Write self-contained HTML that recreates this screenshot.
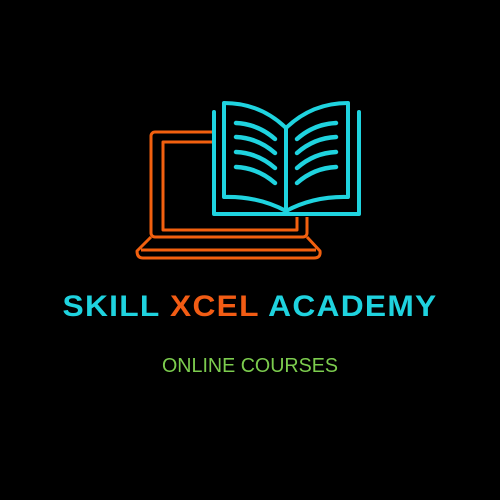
<!DOCTYPE html>
<html><head><style>
html,body{margin:0;padding:0;background:#000;width:500px;height:500px;overflow:hidden}
</style></head><body>
<svg width="500" height="500" viewBox="0 0 500 500" xmlns="http://www.w3.org/2000/svg">
<rect width="500" height="500" fill="#000"/>
<g fill="none" stroke="#f2600f" stroke-width="3" stroke-linejoin="round">
<rect x="151" y="132" width="156" height="105" rx="4"/>
<rect x="163" y="142" width="134" height="88"/>
<path d="M151 237 L137 251 Q137 258 143 258 L314 258 Q321 258 320 251 L307 237"/>
<line x1="141" y1="250" x2="316" y2="250"/>
</g>
<rect x="212" y="104" width="149" height="113" fill="#000"/>
<g fill="none" stroke="#1fd3df" stroke-width="4" stroke-linecap="round" stroke-linejoin="round">
<path d="M214 112 L214 214 L359 214 L359 112"/>
<path d="M224 103 L224 197 Q258 196 286 211 Q314 196 348 197 L348 103 Q312 103 286 128 Q260 103 224 103 Z"/>
<line x1="286" y1="128" x2="286" y2="211"/>
<g stroke-width="4.5">
<path d="M236 123 Q258 124 275 139"/>
<path d="M236 137 Q258 138 275 153"/>
<path d="M236 152 Q258 153 275 168"/>
<path d="M236 167 Q258 168 275 183"/>
<path d="M336 123 Q314 124 297 139"/>
<path d="M336 137 Q314 138 297 153"/>
<path d="M336 152 Q314 153 297 168"/>
<path d="M336 167 Q314 168 297 183"/>
</g>
</g>
<text x="250" y="316" text-anchor="middle" font-family="Liberation Sans, sans-serif" font-weight="bold" font-size="30" letter-spacing="1.2" fill="#1fd3df" textLength="375" lengthAdjust="spacingAndGlyphs">SKILL <tspan fill="#f25c14">XCEL</tspan> ACADEMY</text>
<text x="250" y="372" text-anchor="middle" font-family="Liberation Sans, sans-serif" font-size="20" fill="#7ccc4e" textLength="176" lengthAdjust="spacingAndGlyphs">ONLINE COURSES</text>
</svg>
</body></html>
